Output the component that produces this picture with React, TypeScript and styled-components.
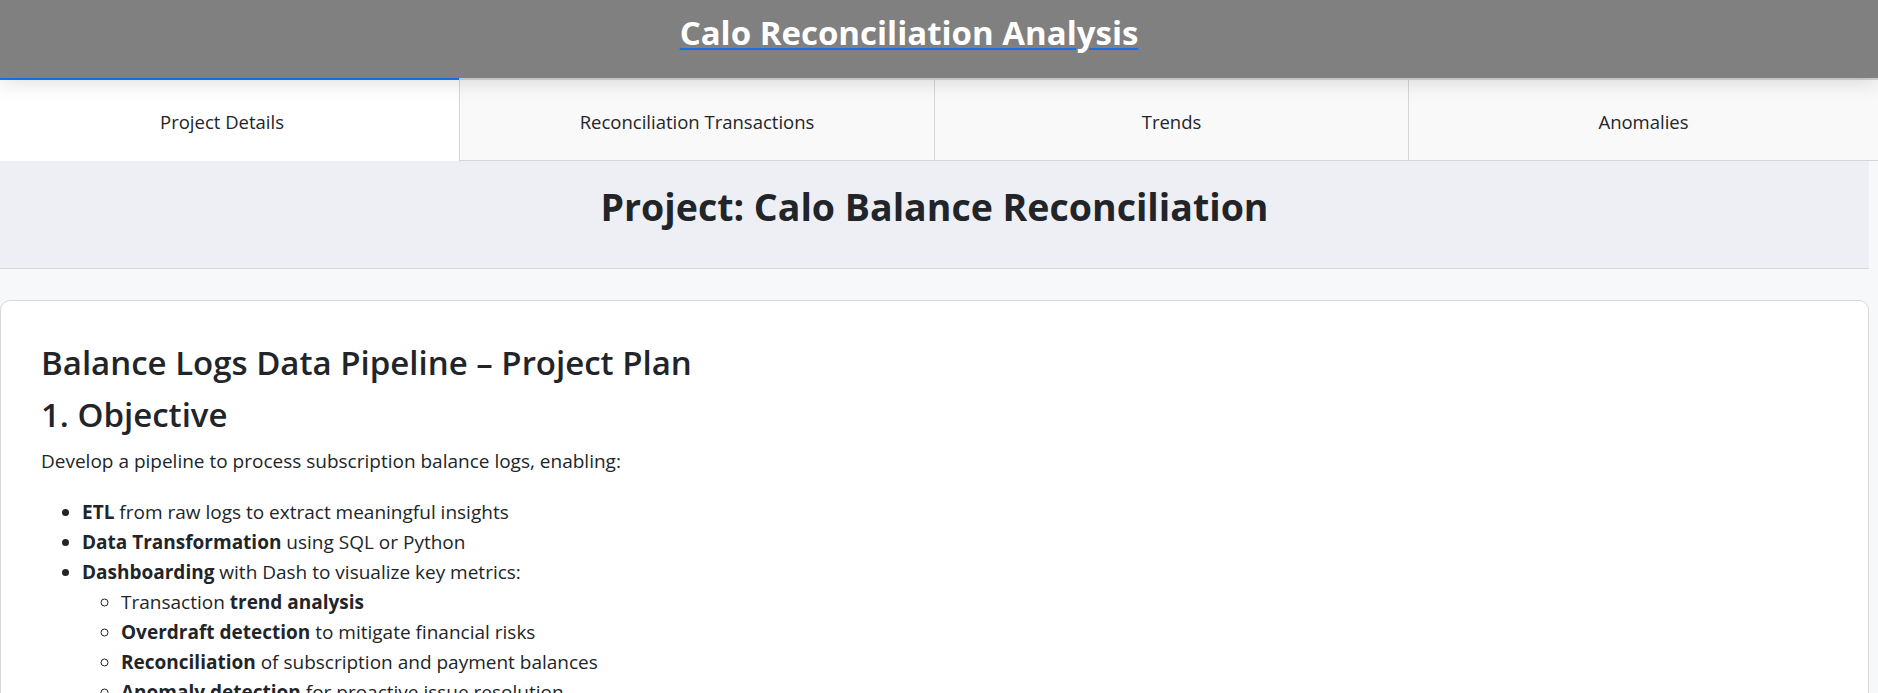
import React from "react";
import styled, { createGlobalStyle } from "styled-components";

const GlobalStyle = createGlobalStyle`
  html, body {
    margin: 0;
    padding: 0;
    overflow: hidden;
    background: #f7f8fa;
  }
  body {
    font-family: "Open Sans", "Noto Sans", sans-serif;
    color: #212529;
  }
`;

const Page = styled.div`
  display: flex;
  flex-direction: column;
  width: 1878px;
`;

const Header = styled.header`
  position: relative;
  z-index: 1;
  height: 78px;
  box-sizing: border-box;
  background: #808080;
  display: flex;
  justify-content: center;
  align-items: flex-start;
  padding: 13px 60px 0 0;
  box-shadow: 0 2px 22px rgba(0, 0, 0, 0.16);
`;

const TitleLink = styled.a`
  font-size: 33px;
  line-height: 40px;
  font-weight: 700;
  color: #ffffff;
  text-decoration: underline;
  text-decoration-color: #1a6fe6;
  text-decoration-thickness: 2px;
  text-underline-offset: 3px;
`;

const TabRow = styled.nav`
  display: grid;
  grid-template-columns: 459px 475px 474px 1fr;
`;

const Tab = styled.div<{ $active?: boolean }>`
  height: 83px;
  box-sizing: border-box;
  display: flex;
  align-items: center;
  justify-content: center;
  font-size: 18.5px;
  color: #212529;
  background: ${(p) => (p.$active ? "#ffffff" : "#f9f9f9")};
  border-top: 2px solid ${(p) => (p.$active ? "#1975fa" : "#d6d6d6")};
  border-bottom: 1px solid ${(p) => (p.$active ? "#ffffff" : "#d6d6d6")};
  border-left: ${(p) => (p.$active ? "none" : "1px solid #d6d6d6")};
  padding: 3px ${(p) => (p.$active ? "15px" : "0")} 0 0;
`;

const Banner = styled.section`
  margin-right: 9px;
  background: #eeeff4;
  border-bottom: 1px solid #d9d9dc;
  padding: 22px 0 37px;
  text-align: center;
`;

const BannerTitle = styled.h1`
  margin: 0;
  font-size: 37.5px;
  line-height: 48px;
  font-weight: 700;
  color: #212529;
`;

const Body = styled.main`
  padding-top: 31px;
  margin-right: 9px;
`;

const Card = styled.article`
  background: #ffffff;
  border: 1px solid #d8d8db;
  border-radius: 10px;
  padding: 41px 40px 40px;
  min-height: 500px;
`;

const PlanTitle = styled.h2`
  margin: 0;
  font-size: 33px;
  line-height: 42px;
  font-weight: 600;
  color: #212529;
`;

const SectionTitle = styled.h2`
  margin: 10px 0 0;
  font-size: 33px;
  line-height: 42px;
  font-weight: 600;
  color: #212529;
`;

const Para = styled.p`
  margin: 12px 0 0;
  font-size: 19px;
  line-height: 27px;
`;

const List = styled.ul<{ $nested?: boolean }>`
  margin: ${(p) => (p.$nested ? "0" : "22px 0 0")};
  padding-left: ${(p) => (p.$nested ? "39px" : "41px")};
  list-style: ${(p) => (p.$nested ? "circle" : "disc")};
  font-size: 19px;
`;

const Item = styled.li`
  line-height: 30px;
`;

export default function App() {
  return (
    <>
      <GlobalStyle />
      <Page>
        <Header>
          <TitleLink href="#">Calo Reconciliation Analysis</TitleLink>
        </Header>
        <TabRow>
          <Tab $active>Project Details</Tab>
          <Tab>Reconciliation Transactions</Tab>
          <Tab>Trends</Tab>
          <Tab>Anomalies</Tab>
        </TabRow>
        <Banner>
          <BannerTitle>Project: Calo Balance Reconciliation</BannerTitle>
        </Banner>
        <Body>
          <Card>
            <PlanTitle>Balance Logs Data Pipeline – Project Plan</PlanTitle>
            <SectionTitle>1. Objective</SectionTitle>
            <Para>Develop a pipeline to process subscription balance logs, enabling:</Para>
            <List>
              <Item>
                <strong>ETL</strong> from raw logs to extract meaningful insights
              </Item>
              <Item>
                <strong>Data Transformation</strong> using SQL or Python
              </Item>
              <Item>
                <strong>Dashboarding</strong> with Dash to visualize key metrics:
                <List $nested>
                  <Item>
                    Transaction <strong>trend analysis</strong>
                  </Item>
                  <Item>
                    <strong>Overdraft detection</strong> to mitigate financial risks
                  </Item>
                  <Item>
                    <strong>Reconciliation</strong> of subscription and payment balances
                  </Item>
                  <Item>
                    <strong>Anomaly detection</strong> for proactive issue resolution
                  </Item>
                </List>
              </Item>
            </List>
          </Card>
        </Body>
      </Page>
    </>
  );
}
